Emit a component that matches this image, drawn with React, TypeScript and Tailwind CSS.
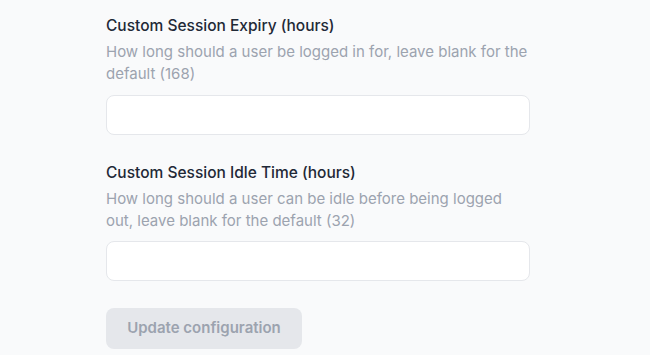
export default function App() {
  return (
    <div className="min-h-screen bg-[#f9fafb] font-['Inter',sans-serif]">
      <div className="pl-[106px] pt-[15px] w-[530px] box-content">
        <div className="w-[424px]">
          <div>
            <label className="block text-[15.5px] leading-[22px] font-medium text-[#1f2937]">
              Custom Session Expiry (hours)
            </label>
            <p className="mt-[4px] text-[15px] leading-[22px] text-[#9ca3af]">
              How long should a user be logged in for, leave blank for the default (168)
            </p>
            <input
              type="text"
              className="mt-[10px] block w-full h-[40px] rounded-lg border border-[#e5e7eb] bg-white px-3 text-[15px] outline-none"
            />
          </div>
          <div className="mt-[27px]">
            <label className="block text-[15.5px] leading-[22px] font-medium text-[#1f2937]">
              Custom Session Idle Time (hours)
            </label>
            <p className="mt-[4px] text-[15px] leading-[22px] text-[#9ca3af]">
              How long should a user can be idle before being logged out, leave blank for the default (32)
            </p>
            <input
              type="text"
              className="mt-[9px] block w-full h-[40px] rounded-lg border border-[#e5e7eb] bg-white px-3 text-[15px] outline-none"
            />
          </div>
          <button
            disabled
            className="mt-[27px] h-[41px] w-[196px] rounded-lg bg-[#e5e7eb] text-[15px] font-semibold text-[#9ca3af]"
          >
            Update configuration
          </button>
        </div>
      </div>
    </div>
  )
}
